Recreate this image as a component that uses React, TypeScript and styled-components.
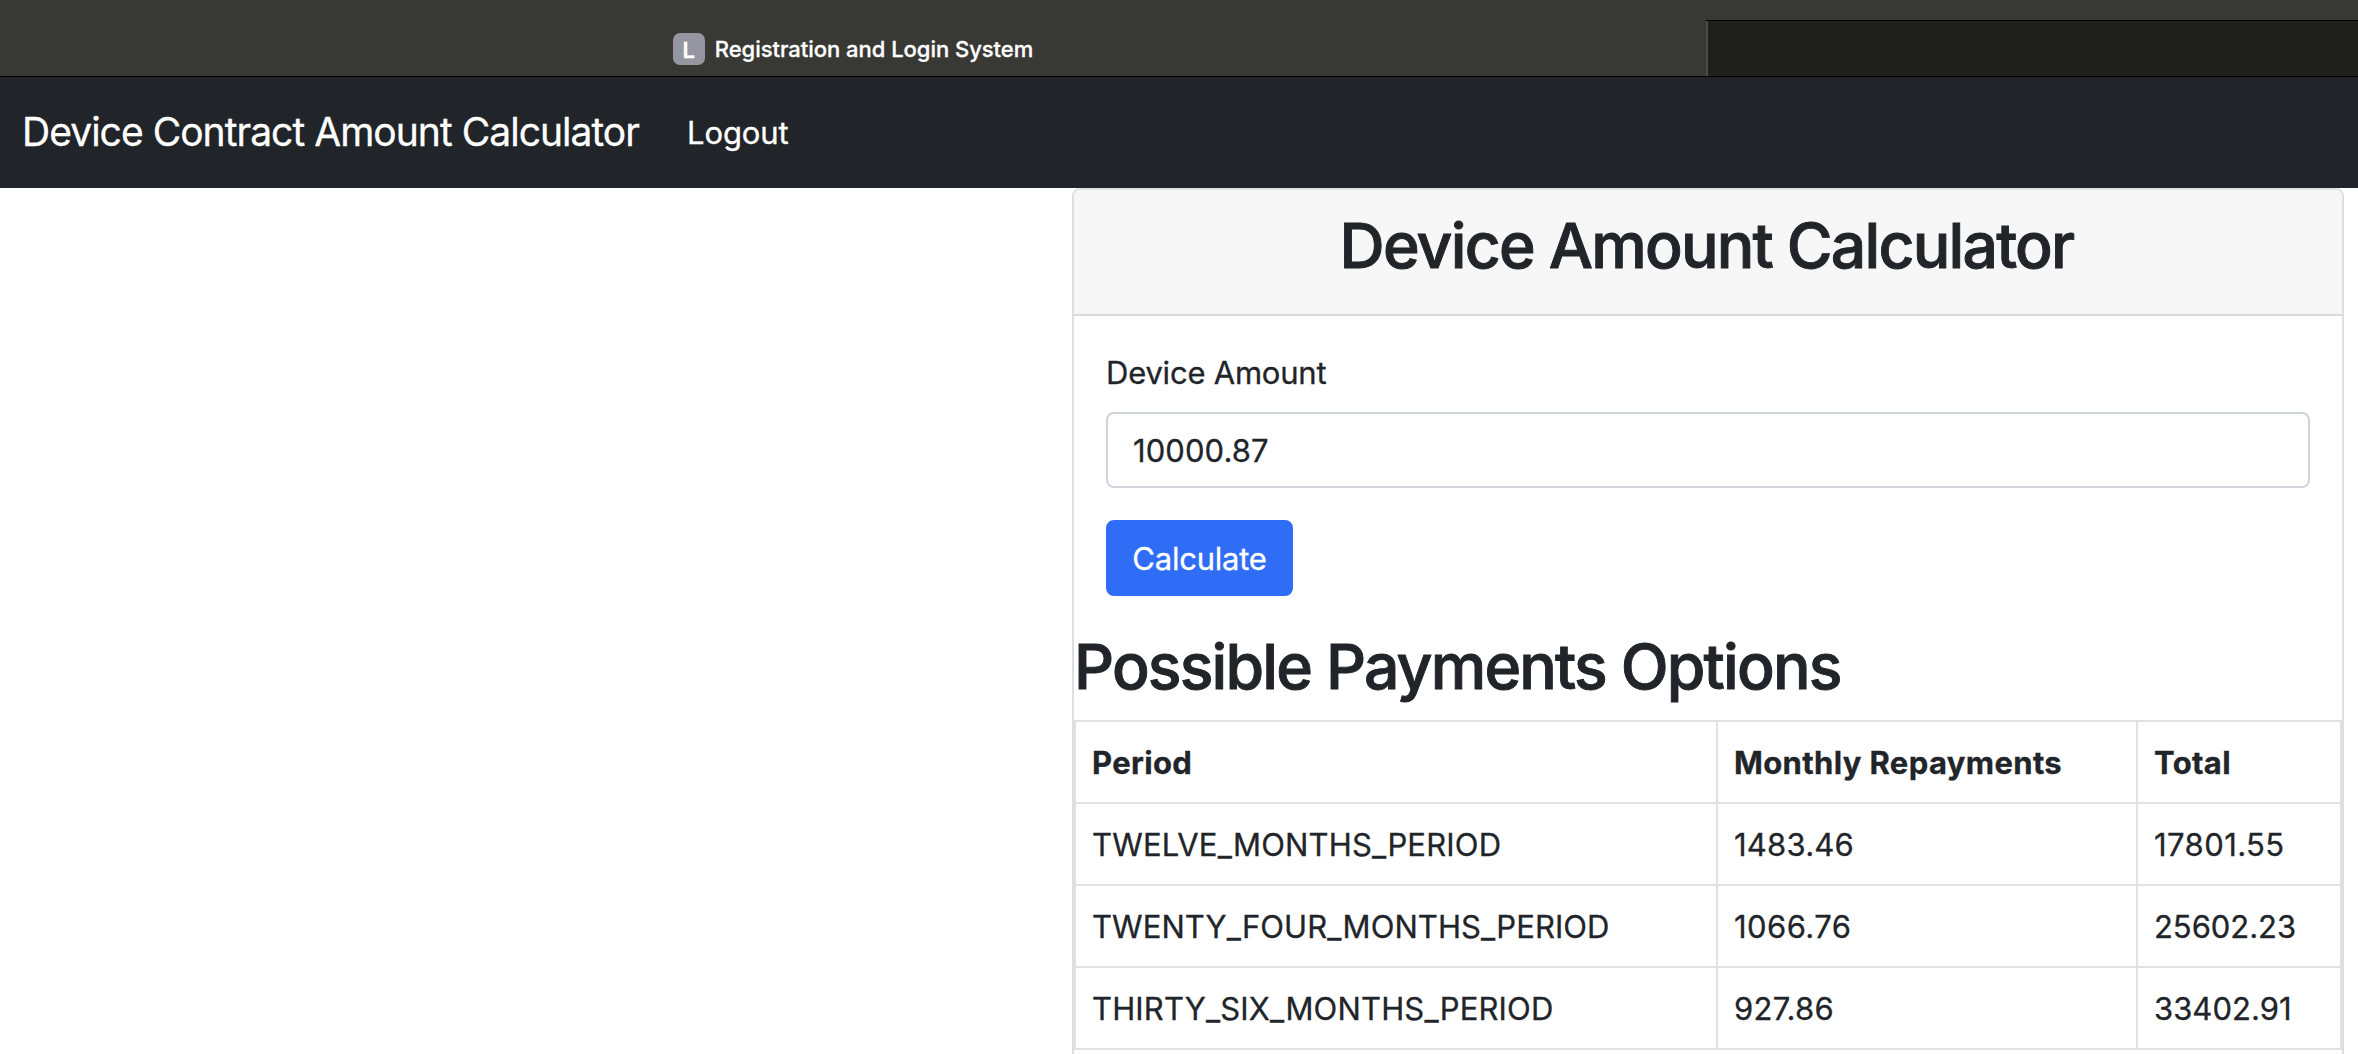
import React from 'react';
import styled, { createGlobalStyle } from 'styled-components';

const GlobalStyle = createGlobalStyle`
  *, *::before, *::after { box-sizing: border-box; }
  body {
    margin: 0;
    height: 1054px;
    overflow: hidden;
    background: #fff;
    color: #212529;
    font-family: Inter, "Liberation Sans", sans-serif;
    font-size: 31px;
    font-weight: 400;
    line-height: 48px;
    -webkit-text-stroke: 0.3px currentColor;
  }
`;

const Page = styled.div`
  height: 1054px;
  overflow: hidden;
`;

const TabStrip = styled.header`
  display: flex;
  align-items: flex-end;
  height: 78px;
  background: #383835;
  border-bottom: 1px solid #1c2225;
  box-shadow: inset 0 -1px 0 #000;
  padding-bottom: 1px;
`;

const ActiveTab = styled.div`
  display: flex;
  align-items: center;
  justify-content: center;
  gap: 10px;
  width: 1706px;
  height: 56px;
  padding-bottom: 1px;
`;

const Favicon = styled.span`
  display: flex;
  align-items: center;
  justify-content: center;
  width: 32px;
  height: 32px;
  margin-top: 2px;
  padding-top: 2px;
  border-radius: 7px;
  background: #9696a2;
  color: #fff;
  font-size: 22px;
  font-weight: 600;
  line-height: 30px;
`;

const TabTitle = styled.span`
  padding-top: 2px;
  color: #fff;
  font-size: 22px;
  font-weight: 500;
  line-height: 32px;
  letter-spacing: -0.03px;
`;

const InactiveTab = styled.div`
  flex: 1;
  height: 55px;
  background: #1f1f1d;
  border-left: 2px solid #4b4b49;
  box-shadow: 0 -1px 0 #000;
`;

const Navbar = styled.nav`
  display: flex;
  align-items: center;
  gap: 48px;
  height: 110px;
  padding: 0 22px;
  background: #212529;
  color: #fff;
`;

const Brand = styled.span`
  font-size: 39px;
  line-height: 58px;
  letter-spacing: -0.97px;
  padding-bottom: 2px;
`;

const NavLink = styled.a`
  color: #fff;
  letter-spacing: -0.1px;
`;

const Main = styled.main`
  display: flex;
  justify-content: flex-end;
  padding-right: 14px;
`;

const Card = styled.section`
  width: 1272px;
  height: 900px;
  border: 2px solid #dfdfdf;
  border-radius: 8px;
`;

const CardHeader = styled.div`
  height: 126px;
  padding: 17px 35px 0 32px;
  background: #f7f7f7;
  border-bottom: 2px solid #d8d8d8;
  border-radius: 6px 6px 0 0;
  text-align: center;
`;

const Heading = styled.h2<{ $tracking: number }>`
  margin: 0 0 16px;
  font-size: 62.5px;
  font-weight: 500;
  line-height: 76px;
  letter-spacing: ${(p) => p.$tracking}px;
  -webkit-text-stroke: 0.9px currentColor;
`;

const Form = styled.form`
  display: flex;
  flex-direction: column;
  align-items: flex-start;
  padding: 33px 32px 32px;
`;

const Label = styled.label`
  margin-bottom: 15px;
  letter-spacing: -0.22px;
`;

const Input = styled.input`
  width: 100%;
  height: 76px;
  margin: 0 0 32px;
  padding: 12px 24px 12px 25px;
  border: 2px solid #ced4da;
  border-radius: 8px;
  background: #fff;
  color: #212529;
  font: inherit;
  letter-spacing: 0.08px;
  outline: none;
`;

const Button = styled.button`
  width: 187px;
  height: 76px;
  padding: 12px 0 11px;
  border: 2px solid #306df6;
  border-radius: 8px;
  background: #306df6;
  color: #fff;
  font: inherit;
  letter-spacing: -0.22px;
`;

const Table = styled.table`
  width: 1268px;
  table-layout: fixed;
  border-collapse: collapse;
`;

const Col = styled.col<{ $width: number }>`
  width: ${(p) => p.$width}px;
`;

const HeadCell = styled.th`
  height: 82px;
  padding: 17px 16px 15px;
  border: 2px solid #dee2e6;
  text-align: left;
  font-weight: 700;
  letter-spacing: 0.36px;
`;

const Cell = styled.td<{ $tracking: number }>`
  height: 82px;
  padding: 17px 16px 15px;
  border: 2px solid #dee2e6;
  letter-spacing: ${(p) => p.$tracking}px;
`;

type Value = { text: string; tracking: number };

const options: Value[][] = [
  [
    { text: 'TWELVE_MONTHS_PERIOD', tracking: 0.17 },
    { text: '1483.46', tracking: 0.22 },
    { text: '17801.55', tracking: 0.42 },
  ],
  [
    { text: 'TWENTY_FOUR_MONTHS_PERIOD', tracking: 0.08 },
    { text: '1066.76', tracking: 0.43 },
    { text: '25602.23', tracking: -0.05 },
  ],
  [
    { text: 'THIRTY_SIX_MONTHS_PERIOD', tracking: 0.16 },
    { text: '927.86', tracking: 0.25 },
    { text: '33402.91', tracking: 0.03 },
  ],
];

export default function App() {
  return (
    <Page>
      <GlobalStyle />
      <TabStrip>
        <ActiveTab>
          <Favicon>L</Favicon>
          <TabTitle>Registration and Login System</TabTitle>
        </ActiveTab>
        <InactiveTab />
      </TabStrip>
      <Navbar>
        <Brand>Device Contract Amount Calculator</Brand>
        <NavLink>Logout</NavLink>
      </Navbar>
      <Main>
        <Card>
          <CardHeader>
            <Heading $tracking={-1.8}>Device Amount Calculator</Heading>
          </CardHeader>
          <Form onSubmit={(e) => e.preventDefault()}>
            <Label htmlFor="amount">Device Amount</Label>
            <Input id="amount" type="text" defaultValue="10000.87" />
            <Button type="submit">Calculate</Button>
          </Form>
          <Heading $tracking={-1.82}>Possible Payments Options</Heading>
          <Table>
            <colgroup>
              <Col $width={642} />
              <Col $width={420} />
              <Col $width={204} />
            </colgroup>
            <thead>
              <tr>
                <HeadCell>Period</HeadCell>
                <HeadCell>Monthly Repayments</HeadCell>
                <HeadCell>Total</HeadCell>
              </tr>
            </thead>
            <tbody>
              {options.map((row) => (
                <tr key={row[0].text}>
                  {row.map((v) => (
                    <Cell key={v.text} $tracking={v.tracking}>
                      {v.text}
                    </Cell>
                  ))}
                </tr>
              ))}
            </tbody>
          </Table>
        </Card>
      </Main>
    </Page>
  );
}
